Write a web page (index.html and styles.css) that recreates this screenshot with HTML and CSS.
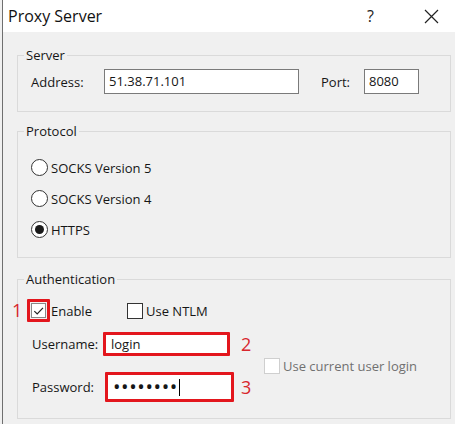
FILE: index.html
```html
<!DOCTYPE html>
<html lang="en">
<head>
    <meta charset="UTF-8">
    <title>Proxy Server</title>
    <link rel="stylesheet" href="styles.css">
</head>
<body>
    <div class="window">
        <div class="titlebar">
            <span class="title">Proxy Server</span>
            <span class="help">?</span>
            <span class="close">
                <svg width="15" height="15" viewBox="0 0 15 15"><path d="M1 1L14 14M14 1L1 14" stroke="#222" stroke-width="1.2" fill="none"/></svg>
            </span>
        </div>

        <div class="content">
            <fieldset class="group">
                <legend>Server</legend>
                <div class="server-row">
                    <span class="lbl address-lbl">Address:</span>
                    <div class="field address">51.38.71.101</div>
                    <span class="lbl port-lbl">Port:</span>
                    <div class="field port">8080</div>
                </div>
            </fieldset>

            <fieldset class="group protocol">
                <legend>Protocol</legend>
                <div class="radios">
                    <div class="radio"><span class="circle"></span>SOCKS Version 5</div>
                    <div class="radio"><span class="circle"></span>SOCKS Version 4</div>
                    <div class="radio"><span class="circle on"></span>HTTPS</div>
                </div>
            </fieldset>

            <fieldset class="group auth">
                <legend>Authentication</legend>
                <div class="auth-body">
                    <div class="check-row">
                        <span class="num num-1">1</span>
                        <span class="mark mark-check">
                            <span class="box">
                                <svg width="14" height="14" viewBox="0 0 14 14"><path d="M2.5 7.2L5.6 10.2L11.8 3.6" stroke="#222" stroke-width="1.3" fill="none"/></svg>
                            </span>
                        </span>
                        <span class="enable">Enable</span>
                        <span class="box"></span>
                        <span class="ntlm">Use NTLM</span>
                    </div>

                    <div class="creds">
                        <div class="creds-fields">
                            <div class="cred-row">
                                <span class="lbl user-lbl">Username:</span>
                                <div class="mark mark-user"><div class="field-in">login</div></div>
                                <span class="num num-2">2</span>
                            </div>
                            <div class="cred-row pass-row">
                                <span class="lbl pass-lbl">Password:</span>
                                <div class="mark mark-pass"><div class="field-in"><span class="dots">••••••••</span><span class="caret"></span></div></div>
                                <span class="num num-3">3</span>
                            </div>
                        </div>
                        <div class="current-user">
                            <span class="box disabled"></span>
                            <span>Use current user login</span>
                        </div>
                    </div>
                </div>
            </fieldset>
        </div>
    </div>
</body>
</html>
```

FILE: styles.css
```css
* {
    box-sizing: border-box;
}
html, body {
    margin: 0;
    padding: 0;
    height: 100%;
    overflow: hidden;
    background-color: #f0f0f0;
    font-family: "Open Sans", "Noto Sans", Arial, sans-serif;
    font-size: 13px;
    color: #161616;
}
.window {
    width: 453px;
    height: 424px;
    margin-left: 2px;
    border-left: 1px solid #6f6f6f;
    background: #f0f0f0;
}

/* barra de titulo */
.titlebar {
    height: 32px;
    background: #fff;
    display: flex;
    align-items: center;
    padding-left: 5px;
}
.title {
    font-size: 16px;
    color: #111;
    flex: 1;
}
.help {
    font-size: 16px;
    color: #222;
    margin-right: 50px;
}
.close {
    display: flex;
    margin-right: 16px;
}

.content {
    padding: 14px 4px 0 14px;
}
.group {
    margin: 0;
    padding: 0;
    border: 1px solid #dadada;
}
.group legend {
    margin-left: 6px;
    padding: 0 2px;
    line-height: 18px;
}
.protocol {
    margin-top: 10px;
}
.auth {
    margin-top: 12px;
}

.lbl {
    display: inline-block;
}
.field {
    height: 25px;
    line-height: 23px;
    background: #fff;
    border: 1px solid #7a7a7a;
    padding-left: 4px;
}

/* servidor */
.server-row {
    display: flex;
    align-items: center;
    padding: 5px 0 17px 13px;
}
.address-lbl {
    width: 73px;
}
.address {
    width: 195px;
}
.port-lbl {
    width: 43px;
    margin-left: 22px;
}
.port {
    width: 55px;
}

/* protocolo */
.radios {
    padding: 12px 0 12px 13px;
}
.radio {
    height: 31px;
    display: flex;
    align-items: center;
}
.circle {
    width: 17px;
    height: 17px;
    border-radius: 50%;
    border: 1px solid #333;
    background: #fff;
    margin-right: 3px;
    display: flex;
    justify-content: center;
    align-items: center;
}
.circle.on::after {
    content: "";
    width: 9px;
    height: 9px;
    border-radius: 50%;
    background: #1a1a1a;
}

/* autenticacao */
.auth-body {
    padding: 11px 0 16px 9px;
}
.check-row {
    display: flex;
    align-items: center;
    height: 23px;
    position: relative;
}
.box {
    width: 16px;
    height: 16px;
    border: 1px solid #333;
    background: #fff;
    display: flex;
    justify-content: center;
    align-items: center;
}
.box.disabled {
    border-color: #cfcfcf;
}
.mark {
    border: 3px solid #e3161d;
    border-radius: 1px;
}
.mark-check {
    width: 23px;
    height: 23px;
    display: flex;
    align-items: center;
    justify-content: center;
}
.mark-check .box {
    width: 15px;
    height: 15px;
    border-color: #888;
}
.enable {
    width: 76px;
    margin-left: 1px;
}
.ntlm {
    margin-left: 3px;
}

.num {
    color: #d8262d;
    font-size: 18px;
}
.num-1 {
    position: absolute;
    left: -15px;
    top: -1px;
}

.creds {
    display: flex;
    padding-left: 5px;
    margin-top: 10px;
}
.creds-fields {
    width: 232px;
}
.cred-row {
    display: flex;
    align-items: center;
}
.pass-row {
    margin-top: 16px;
}
.user-lbl {
    width: 71px;
}
.pass-lbl {
    width: 73px;
}
.field-in {
    background: #fff;
    height: 100%;
    padding-left: 5px;
    display: flex;
    align-items: center;
}
.mark-user {
    width: 127px;
    height: 24px;
}
.mark-pass {
    width: 129px;
    height: 30px;
}
.dots {
    font-size: 20px;
    letter-spacing: 0.6px;
    line-height: 20px;
}
.caret {
    width: 1px;
    height: 17px;
    background: #000;
    margin-left: 1px;
}
.num-2 {
    margin-left: 11px;
}
.num-3 {
    margin-left: 7px;
}
.current-user {
    display: flex;
    align-items: center;
    gap: 3px;
    margin-top: 26px;
    height: 16px;
    color: #707070;
}
```
